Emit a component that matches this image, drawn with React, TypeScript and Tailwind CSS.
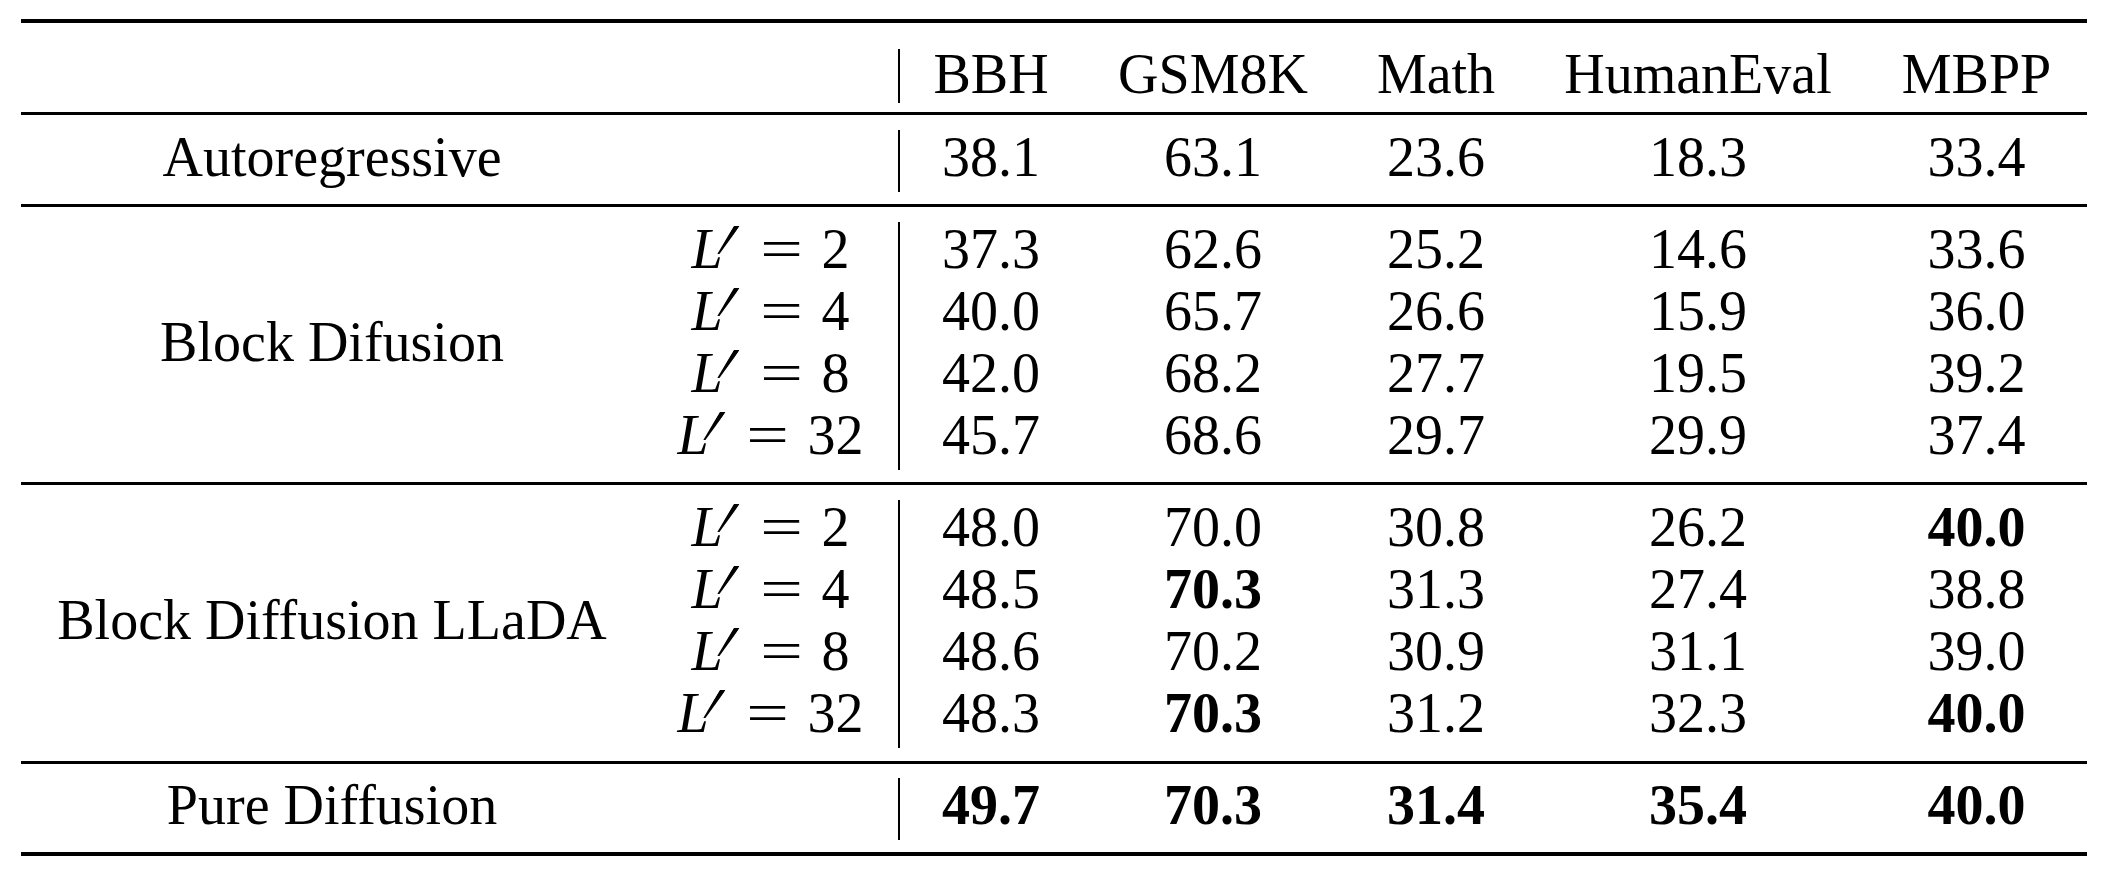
import React from "react";

type Cell = { v: string; b?: boolean };

type Row = { l?: string; cells: Cell[] };

type Group = { label: string; rows: Row[]; pad: string };

const GRID =
  "grid grid-cols-[622px_255px_186px_258px_188px_336px_221px] auto-rows-[62px]";

// vertical rule after the L' column, drawn a little lower than the row box
const BAR =
  "relative before:absolute before:left-0 before:top-[4px] before:bottom-[-4px] before:w-[2px] before:bg-black";
const HEAD_BAR =
  "relative before:absolute before:left-0 before:top-[6px] before:bottom-[2px] before:w-[2px] before:bg-black";

const n = (v: string): Cell => ({ v });
const b = (v: string): Cell => ({ v, b: true });

const HEADERS = ["BBH", "GSM8K", "Math", "HumanEval", "MBPP"];

const GROUPS: Group[] = [
  {
    label: "Autoregressive",
    pad: "pt-[11px] pb-[16px]",
    rows: [{ cells: [n("38.1"), n("63.1"), n("23.6"), n("18.3"), n("33.4")] }],
  },
  {
    label: "Block Difusion",
    pad: "pt-[11px] pb-[16px]",
    rows: [
      { l: "2", cells: [n("37.3"), n("62.6"), n("25.2"), n("14.6"), n("33.6")] },
      { l: "4", cells: [n("40.0"), n("65.7"), n("26.6"), n("15.9"), n("36.0")] },
      { l: "8", cells: [n("42.0"), n("68.2"), n("27.7"), n("19.5"), n("39.2")] },
      { l: "32", cells: [n("45.7"), n("68.6"), n("29.7"), n("29.9"), n("37.4")] },
    ],
  },
  {
    label: "Block Diffusion LLaDA",
    pad: "pt-[11px] pb-[17px]",
    rows: [
      { l: "2", cells: [n("48.0"), n("70.0"), n("30.8"), n("26.2"), b("40.0")] },
      { l: "4", cells: [n("48.5"), b("70.3"), n("31.3"), n("27.4"), n("38.8")] },
      { l: "8", cells: [n("48.6"), n("70.2"), n("30.9"), n("31.1"), n("39.0")] },
      { l: "32", cells: [n("48.3"), b("70.3"), n("31.2"), n("32.3"), b("40.0")] },
    ],
  },
  {
    label: "Pure Diffusion",
    pad: "pt-[10px] pb-[16px]",
    rows: [{ cells: [b("49.7"), b("70.3"), b("31.4"), b("35.4"), b("40.0")] }],
  },
];

function LEq({ k }: { k: string }) {
  return (
    <span className="inline-flex items-baseline whitespace-nowrap">
      <span className="relative inline-block w-[49px] italic">
        L
        <span className="absolute left-[32px] top-[8px] h-[28px] w-[7px] -skew-x-[32deg] bg-black [clip-path:polygon(15%_0,100%_0,60%_100%,30%_100%)]" />
      </span>
      <span className="ml-[21px] inline-block w-[39px] scale-x-[1.35] text-center">=</span>
      <span className="ml-[21px]">{k}</span>
    </span>
  );
}

function Rule({ h }: { h: string }) {
  return <div className={`${h} w-full bg-black`} />;
}

function GroupBlock({ group }: { group: Group }) {
  const span = group.rows.length;
  return (
    <div className={group.pad}>
      <div className={GRID}>
        <div
          className={`flex items-center justify-center ${
            span > 1 ? "row-span-4" : ""
          }`}
        >
          {group.label}
        </div>
        {group.rows.map((row, i) => (
          <React.Fragment key={i}>
            <div className="col-start-2 flex items-center justify-center">
              {row.l ? <LEq k={row.l} /> : null}
            </div>
            {row.cells.map((c, j) => (
              <div
                key={j}
                className={`flex items-center justify-center ${
                  j === 0 ? BAR : ""
                } ${c.b ? "font-bold" : ""}`}
              >
                {c.v}
              </div>
            ))}
          </React.Fragment>
        ))}
      </div>
    </div>
  );
}

export default function App() {
  return (
    <div
      className="h-[888px] w-[2122px] bg-white pt-[19px] text-[56px] leading-[62px] text-black"
      style={{ fontFamily: '"Liberation Serif", "Times New Roman", serif' }}
    >
      <div className="ml-[21px] w-[2066px]">
        <Rule h="h-[4px]" />
        <div className="pt-[20px] pb-[7px]">
          <div className={GRID}>
            <div />
            <div />
            {HEADERS.map((h, j) => (
              <div
                key={h}
                className={`flex items-center justify-center ${
                  j === 0 ? HEAD_BAR : ""
                }`}
              >
                {h}
              </div>
            ))}
          </div>
        </div>
        {GROUPS.map((g, i) => (
          <React.Fragment key={g.label}>
            <Rule h="h-[3px]" />
            <GroupBlock group={g} />
            {i === GROUPS.length - 1 ? <Rule h="h-[4px]" /> : null}
          </React.Fragment>
        ))}
      </div>
    </div>
  );
}
